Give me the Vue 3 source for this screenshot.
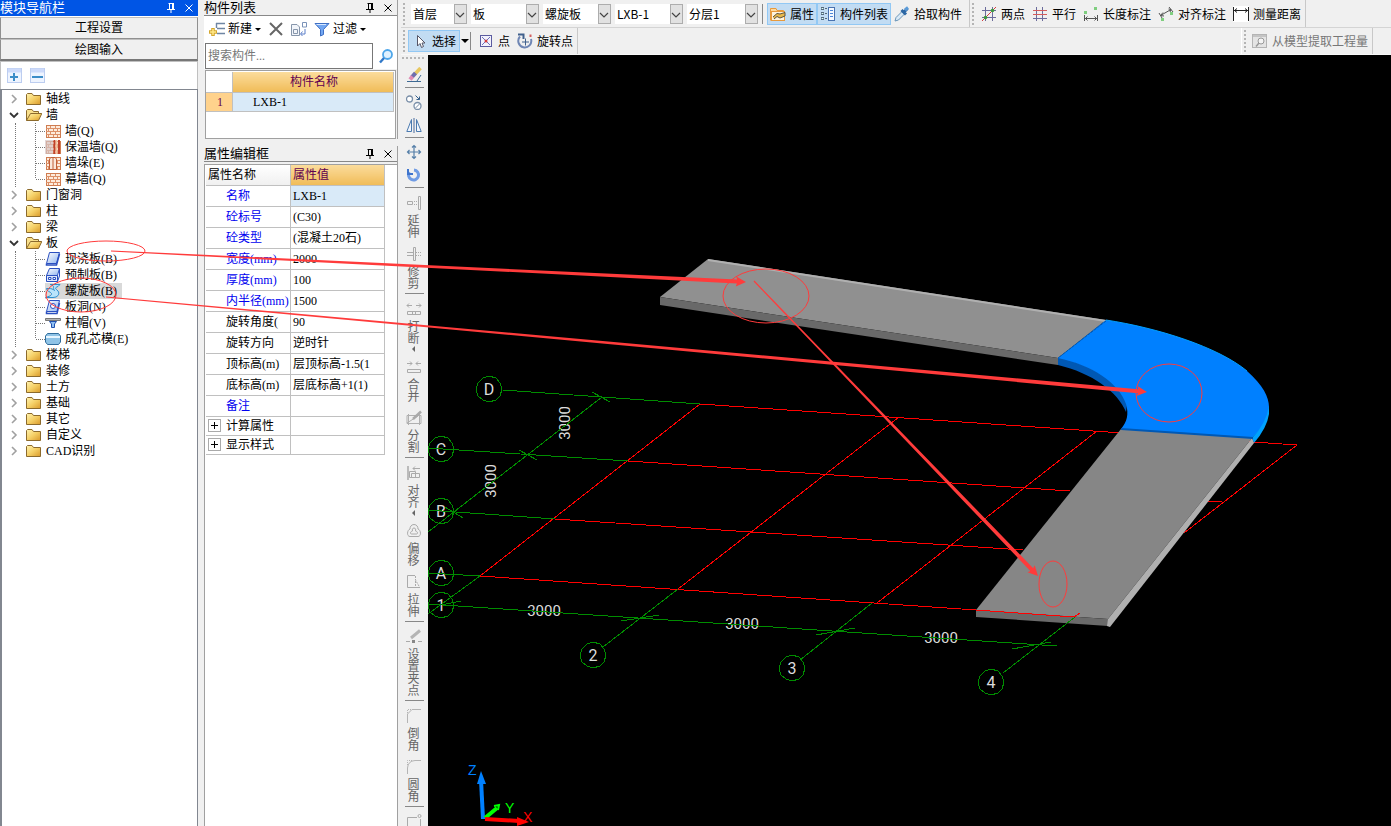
<template>
  <div class="app">
    <!-- 模块导航栏 -->
    <aside class="nav">
      <header class="title active">
        <h2>模块导航栏</h2>
        <button type="button" aria-label="固定" v-html="svg('pin')"></button>
        <button type="button" aria-label="关闭" v-html="svg('close')"></button>
      </header>
      <button type="button" class="nav-tab">工程设置</button>
      <button type="button" class="nav-tab">绘图输入</button>
      <div class="nav-tools">
        <button type="button" aria-label="展开" v-html="svg('plus')"></button>
        <button type="button" aria-label="折叠" v-html="svg('minus')"></button>
      </div>
      <ul class="tree">
        <li v-for="group in tree" :key="group.name">
          <div class="node" @click="group.open = !group.open">
            <span class="icon chevron" v-html="svg(group.open ? 'down' : 'right')"></span>
            <span class="icon" v-html="svg(group.open ? 'folderOpen' : 'folder')"></span>
            <span class="node-text">{{ group.name }}</span>
          </div>
          <ul v-if="group.open" class="children">
            <li
              v-for="(item, i) in group.children"
              :key="item.name"
              :class="['node', { selected: item.name === current }]"
              @click="current = item.name"
            >
              <span class="icon branch" v-html="svg(i === group.children.length - 1 ? 'branchEnd' : 'branch')"></span>
              <span class="leaf">
                <span class="icon" v-html="svg(item.icon)"></span>
                <span class="node-text">{{ item.name }}</span>
              </span>
            </li>
          </ul>
        </li>
      </ul>
    </aside>

    <div class="side">
      <!-- 构件列表 -->
      <section class="panel">
        <header class="title">
          <h2>构件列表</h2>
          <button type="button" aria-label="固定" v-html="svg('pin')"></button>
          <button type="button" aria-label="关闭" v-html="svg('close')"></button>
        </header>
        <div class="list-tools">
          <button type="button"><span class="icon" v-html="svg('create')"></span>新建<i class="caret"></i></button>
          <button type="button" aria-label="删除"><span class="icon" v-html="svg('remove')"></span></button>
          <button type="button" aria-label="复制"><span class="icon" v-html="svg('duplicate')"></span></button>
          <button type="button"><span class="icon" v-html="svg('filter')"></span>过滤<i class="caret"></i></button>
        </div>
        <div class="search">
          <input v-model="keyword" type="text" aria-label="搜索构件" placeholder="搜索构件..." />
          <button type="button" aria-label="搜索" v-html="svg('search')"></button>
        </div>
        <div class="list-box">
          <table class="list">
            <thead>
              <tr><th class="num"></th><th class="gold">构件名称</th></tr>
            </thead>
            <tbody>
              <tr><td class="num gold-flat">1</td><td class="picked">LXB-1</td></tr>
            </tbody>
          </table>
        </div>
      </section>

      <!-- 属性编辑框 -->
      <section class="panel grow">
        <header class="title">
          <h2>属性编辑框</h2>
          <button type="button" aria-label="固定" v-html="svg('pin')"></button>
          <button type="button" aria-label="关闭" v-html="svg('close')"></button>
        </header>
        <div class="prop-box">
          <table class="props">
            <thead>
              <tr><th>属性名称</th><th class="gold">属性值</th></tr>
            </thead>
            <tbody>
              <tr v-for="row in props" :key="row.name" :class="{ group: row.group }">
                <td :class="{ blue: row.blue }">
                  <button v-if="row.group" type="button" class="expand" :aria-label="row.name" v-html="svg('expand')"></button>{{ row.name }}
                </td>
                <td :class="{ picked: row.picked }">{{ row.value }}</td>
              </tr>
            </tbody>
          </table>
        </div>
      </section>
    </div>

    <main class="work">
      <div class="bar">
        <div class="bar-group">
          <span class="grip"></span>
          <label v-for="s in selects" :key="s.label" :class="['combo', s.size]">
            <select v-model="s.value" :aria-label="s.label">
              <option>{{ s.value }}</option>
            </select>
            <span class="combo-arrow" v-html="svg('comboArrow')"></span>
          </label>
          <span class="sep"></span>
          <span class="toggles">
            <button type="button" class="tool on"><span class="icon" v-html="svg('attrs')"></span>属性</button>
            <button type="button" class="tool on"><span class="icon" v-html="svg('members')"></span>构件列表</button>
            <button type="button" class="tool"><span class="icon" v-html="svg('picker')"></span>拾取构件</button>
          </span>
        </div>
        <div class="bar-group measure">
          <span class="grip"></span>
          <button v-for="t in measures" :key="t.name" type="button" class="tool flat">
            <span class="icon" v-html="svg(t.icon)"></span>{{ t.name }}
          </button>
        </div>
      </div>
      <div class="bar">
        <div class="bar-group draw">
          <span class="grip"></span>
          <button type="button" class="tool on"><span class="icon" v-html="svg('cursor')"></span>选择</button>
          <i class="caret big"></i>
          <span class="sep"></span>
          <button type="button" class="tool flat"><span class="icon" v-html="svg('point')"></span>点</button>
          <button type="button" class="tool flat"><span class="icon" v-html="svg('rotatePoint')"></span>旋转点</button>
        </div>
        <div class="bar-group extract">
          <span class="grip"></span>
          <button type="button" class="tool flat" disabled><span class="icon" v-html="svg('extract')"></span>从模型提取工程量</button>
        </div>
      </div>

      <div class="stage">
        <nav class="rail">
          <span class="rail-grip"></span>
          <template v-for="(t, i) in railTools" :key="i">
            <hr v-if="t.sep" />
            <button v-else type="button" :class="['rail-tool', { bare: !t.name }]" :aria-label="t.name || t.label">
              <span class="icon" v-html="svg(t.icon)"></span>
              <span v-if="t.name" class="rail-text">{{ t.name }}</span>
              <i v-if="t.more" class="more"></i>
            </button>
          </template>
        </nav>

        <!-- 三维视图 -->
        <svg class="scene" viewBox="428 55 963 771" preserveAspectRatio="xMinYMin slice">
          <g class="labels">
            <text v-for="b in bubbles" :key="b.t" :x="b.x" :y="b.y + 6">{{ b.t }}</text>
          </g>
          <g class="labels dims">
            <text x="544" y="616">3000</text>
            <text x="742" y="629">3000</text>
            <text x="941" y="643">3000</text>
            <text transform="translate(570 423) rotate(-90)">3000</text>
            <text transform="translate(496 481) rotate(-90)">3000</text>
          </g>
          <g class="red" shape-rendering="crispEdges">
            <path d="M700 404 1297 445M628 461 1070 491M1208 501H1222M555 519 1023 550M480 576 976 610" />
            <path d="M480 576 700 404M678 589 899 417M877 603 1097 431M1184 533 1297 445" />
          </g>
          <g class="green" shape-rendering="crispEdges">
            <path d="M503 390 700 404M428 448 628 461M428 510 555 519M428 573 480 576M428 604 1057 646" />
            <path d="M428 532 602 397M480 576 428 614M678 589 603 647M872 603 800 660" />
            <path d="M592 392 610 402M519 450 537 460M445 507 463 518M441 605 461 601M621 621 659 615M816 635 855 628M1012 649 1051 642" />
            <polygon v-for="b in bubbles" :key="b.t" :points="ring(b.x, b.y)" />
          </g>

          <polygon points="708,259 1106,320 1058,358 660,297" fill="#909090" />
          <polygon points="660,297 1058,358 1058,365 660,305" fill="#696969" />
          <path d="M708 260 1106 321" stroke="#b0b0b0" stroke-width="2" />
          <path
            d="M1058 357C1092 365 1122 382 1127 405L1126 412C1118 392 1092 373 1058 365Z"
            fill="#0058b4"
          />
          <path
            d="M1106 320C1158 328 1218 347 1247 371C1263 385 1269 397 1269 407C1269 419 1261 430 1252 438L1121 429C1127 422 1129 414 1126 404C1119 383 1092 365 1058 358Z"
            fill="#0080ff"
          />
          <path d="M1269 406V414Q1267 428 1254 443L1252 438Q1266 424 1269 406Z" fill="#00a2ff" />
          <path d="M1106 320C1158 328 1218 347 1247 371" fill="none" stroke="#00a0ff" stroke-width="1" />
          <path d="M1106 321 1058 358" stroke="#0058b4" stroke-dasharray="3 1" />
          <polygon points="1121,429 1252,438 1108,619 976,610" fill="#868686" />
          <polygon points="976,610 1108,619 1108,626 976,617" fill="#6a6a6a" />
          <polygon points="1252,438 1254,443 1110,627 1107,626 1108,619" fill="#b0b0b0" />
          <path d="M1121 429 1253 438" stroke="#0058b4" stroke-width="2" />
          <path class="red" d="M976 610 1074 617 1080 613" shape-rendering="crispEdges" />
          <path class="green" d="M1075 617 1003 673" shape-rendering="crispEdges" />

          <!-- 坐标轴 -->
          <path d="M483 819 481 780" stroke="#0080ff" stroke-width="4" />
          <polygon points="481,771 477,784 486,784" fill="#0080ff" />
          <path d="M485 818 497 808" stroke="#00ff00" stroke-width="4" />
          <path d="M494 806 499 805 498 810" fill="none" stroke="#00ff00" stroke-width="2" />
          <path d="M485 819 519 821" stroke="#ff0000" stroke-width="4" />
          <polygon points="529,822 517,817 517,826" fill="#ff0000" />
          <g class="axis-names">
            <text x="468" y="775" fill="#0080ff">Z</text>
            <text x="505" y="813" fill="#00ff00">Y</text>
            <text x="523" y="822" fill="#ff0000">X</text>
          </g>
        </svg>
      </div>
    </main>

    <!-- 标注箭头 -->
    <svg class="marks" viewBox="0 0 1391 826" preserveAspectRatio="xMinYMin slice">
      <g fill="none" stroke="#ff3b3b">
        <ellipse cx="106" cy="251" rx="39" ry="10" />
        <ellipse cx="81" cy="295" rx="35" ry="17" />
        <ellipse cx="766" cy="296" rx="43" ry="27" />
        <ellipse cx="1169" cy="393" rx="33" ry="29" />
        <ellipse cx="1053" cy="584" rx="14" ry="23" />
      </g>
      <g fill="#ff3b3b">
        <polygon v-for="(a, i) in arrows" :key="i" :points="arrow(a)" />
      </g>
    </svg>
  </div>
</template>

<script setup>
import { ref } from 'vue';

const current = ref('螺旋板(B)');
const keyword = ref('');

const tree = ref([
  { name: '轴线' },
  {
    name: '墙',
    open: true,
    children: [
      { name: '墙(Q)', icon: 'wall' },
      { name: '保温墙(Q)', icon: 'wallWarm' },
      { name: '墙垛(E)', icon: 'wallPier' },
      { name: '幕墙(Q)', icon: 'wall' }
    ]
  },
  { name: '门窗洞' },
  { name: '柱' },
  { name: '梁' },
  {
    name: '板',
    open: true,
    children: [
      { name: '现浇板(B)', icon: 'slab' },
      { name: '预制板(B)', icon: 'slabPre' },
      { name: '螺旋板(B)', icon: 'slabSpiral' },
      { name: '板洞(N)', icon: 'slabHole' },
      { name: '柱帽(V)', icon: 'cap' },
      { name: '成孔芯模(E)', icon: 'core' }
    ]
  },
  { name: '楼梯' },
  { name: '装修' },
  { name: '土方' },
  { name: '基础' },
  { name: '其它' },
  { name: '自定义' },
  { name: 'CAD识别' }
]);

const props = [
  { name: '名称', value: 'LXB-1', blue: true, picked: true },
  { name: '砼标号', value: '(C30)', blue: true },
  { name: '砼类型', value: '(混凝土20石)', blue: true },
  { name: '宽度(mm)', value: '2000', blue: true },
  { name: '厚度(mm)', value: '100', blue: true },
  { name: '内半径(mm)', value: '1500', blue: true },
  { name: '旋转角度(', value: '90' },
  { name: '旋转方向', value: '逆时针' },
  { name: '顶标高(m)', value: '层顶标高-1.5(1' },
  { name: '底标高(m)', value: '层底标高+1(1)' },
  { name: '备注', value: '', blue: true },
  { name: '计算属性', value: '', group: true },
  { name: '显示样式', value: '', group: true }
];

const selects = ref([
  { label: '楼层', value: '首层', size: 'small' },
  { label: '类别', value: '板', size: 'medium' },
  { label: '类型', value: '螺旋板', size: 'medium' },
  { label: '构件', value: 'LXB-1', size: 'medium' },
  { label: '分层', value: '分层1', size: 'large' }
]);

const measures = [
  { name: '两点', icon: 'twoPoint' },
  { name: '平行', icon: 'parallel' },
  { name: '长度标注', icon: 'dimLength' },
  { name: '对齐标注', icon: 'dimAlign' },
  { name: '测量距离', icon: 'ruler' }
];

const railTools = [
  { icon: 'eraser', label: '删除' },
  { sep: true },
  { icon: 'copy', label: '复制' },
  { icon: 'mirror', label: '镜像' },
  { sep: true },
  { icon: 'move', label: '移动' },
  { icon: 'rotate', label: '旋转' },
  { sep: true },
  { icon: 'extend', name: '延伸' },
  { icon: 'trim', name: '修剪' },
  { sep: true },
  { icon: 'split', name: '打断', more: true },
  { icon: 'join', name: '合并' },
  { icon: 'cut', name: '分割' },
  { sep: true },
  { icon: 'align', name: '对齐', more: true },
  { icon: 'offset', name: '偏移' },
  { icon: 'stretch', name: '拉伸' },
  { sep: true },
  { icon: 'grips', name: '设置夹点' },
  { sep: true },
  { icon: 'chamfer', name: '倒角' },
  { icon: 'fillet', name: '圆角' },
  { sep: true },
  { icon: 'rect', label: '矩形' }
];

const bubbles = [
  { t: 'D', x: 489, y: 389 },
  { t: 'C', x: 441, y: 449 },
  { t: 'B', x: 441, y: 511 },
  { t: 'A', x: 441, y: 573 },
  { t: '1', x: 441, y: 605 },
  { t: '2', x: 593, y: 655 },
  { t: '3', x: 792, y: 668 },
  { t: '4', x: 991, y: 682 }
];

// 起点、终点
const arrows = [
  [111, 251, 746, 282],
  [106, 297, 1147, 392],
  [754, 281, 1038, 576]
];

const ring = (cx, cy) => {
  const pts = [];
  for (let i = 0; i < 12; i++) {
    const a = (i * Math.PI) / 6;
    pts.push(`${Math.round(cx + 13 * Math.cos(a))},${Math.round(cy + 13 * Math.sin(a))}`);
  }
  return pts.join(' ');
};

// 由细到粗的箭头
const arrow = ([x1, y1, x2, y2]) => {
  const len = Math.hypot(x2 - x1, y2 - y1);
  const ux = (x2 - x1) / len;
  const uy = (y2 - y1) / len;
  const at = (d, w) => `${x1 + ux * d - uy * w},${y1 + uy * d + ux * w}`;
  return [
    at(0, 0.6), at(len - 9, 2), at(len - 10, 5), at(len, 0),
    at(len - 10, -5), at(len - 9, -2), at(0, -0.6)
  ].join(' ');
};

const folderDefs = '<linearGradient id="fd" x1="0" y1="0" x2="1" y2="1"><stop offset="0" stop-color="#fff3b0"/><stop offset=".5" stop-color="#f5d067"/><stop offset="1" stop-color="#d9992a"/></linearGradient>';
const slabDefs = '<linearGradient id="sl" x1="0" y1="0" x2="1" y2="1"><stop offset="0" stop-color="#fff"/><stop offset="1" stop-color="#8fb4ef"/></linearGradient>';
const bricks = '<rect x="1.500" y="2.500" width="14" height="12" fill="#fdebdc" stroke="#cf7c50"/><path d="M1 5.500H15M1 8.500H15M1 11.500H15M5.500 3V5M10.500 3V5M3.500 6V8M8.500 6V8M12.500 6V8M5.500 9V11M10.500 9V11M3.500 12V14M8.500 12V14M12.500 12V14" stroke="#dc9068" fill="none"/>';

const icons = {
  pin: '<path d="M5.500 3.500H10.500M6.500 3.500V9M9.500 3V9M10.500 3V9M4 9.500H12M8 10V13" stroke="currentColor" fill="none"/>',
  close: '<path d="M4.500 4.500 11.500 11.500M11.500 4.500 4.500 11.500" stroke="currentColor" fill="none"/>',
  plus: '<rect x=".5" y=".5" width="14" height="14" fill="#eef4ff" stroke="#bccdf0"/><path d="M1 2.500H14" stroke="#cddafa" stroke-width="4"/><path d="M3 9H11M7 5V13" stroke="#3c8dc8" stroke-width="2"/>',
  minus: '<rect x=".5" y=".5" width="14" height="14" fill="#eef4ff" stroke="#bccdf0"/><path d="M1 2.500H14" stroke="#cddafa" stroke-width="4"/><path d="M2 9H13" stroke="#3c8dc8" stroke-width="2"/>',
  right: '<path d="M6 4 10 8 6 12" fill="none" stroke="#a0a0a0" stroke-width="1.600"/>',
  down: '<path d="M4 6 8 10 12 6" fill="none" stroke="#333" stroke-width="1.800"/>',
  folder: `${folderDefs}<path d="M.5 13.500V3.500L1.500 2.500H6L7.500 4.500H14.500V13.500Z" fill="url(#fd)" stroke="#8c6a2c"/>`,
  folderOpen: `${folderDefs}<path d="M.5 13.500V3.500L1.500 2.500H6L7.500 4.500H12.500V7" fill="#f9e08c" stroke="#8c6a2c"/><path d="M.5 13.500 4.500 6.500H15.800L12.500 13.500Z" fill="url(#fd)" stroke="#8c6a2c"/>`,
  branch: '<path d="M3.500 0V16M4 8.500H13" stroke="#777" stroke-dasharray="1 1" fill="none"/>',
  branchEnd: '<path d="M3.500 0V8M4 8.500H13" stroke="#777" stroke-dasharray="1 1" fill="none"/>',
  wall: bricks,
  wallWarm: `${bricks}<rect x="0" y="1" width="8" height="14" fill="#d4c4c4" opacity=".7"/><path d="M9.500 1V15M14 1V15" stroke="#c0402a" stroke-width="2"/><path d="M11.500 1V15" stroke="#f3c2a0" stroke-width="2"/>`,
  wallPier: `${bricks}<path d="M4.500 14.500V4L6 2.500H10L11.500 4V14.500ZM8 3V14.500" fill="#fbe8da" stroke="#c06038"/>`,
  slab: `${slabDefs}<path d="M4.500 1.500H14.500L11.500 12.500H1.500Z" fill="url(#sl)" stroke="#2a4fc0"/><path d="M1.500 12.500V14H11.500L14.500 3" fill="none" stroke="#2a4fc0" stroke-width="1.500"/>`,
  slabPre: `${slabDefs}<path d="M4.500 1.500H14.500L12.500 8.500H1.500Z" fill="url(#sl)" stroke="#2a4fc0"/><path d="M1.500 8.500H12.500V14.500H1.500ZM12.500 14.500 14.500 9V2" fill="#dfe9fb" stroke="#2a4fc0"/><path d="M3.500 10.500H6V12.500H3.500ZM8 10.500H10.500V12.500H8Z" fill="#fff" stroke="#2a4fc0"/>`,
  slabSpiral: '<path d="M5 1.500H15L13 3.500C10 4.500 10 5.500 12 7C15 9.500 14 12.500 11 14L8 14.500H.5C4 13.500 7 12.500 6.500 10.500C5.500 8.500 1.500 8.500 1.500 5.500H4C6 5.500 8 6 9.500 7.500C7 4.500 11 3 5 1.500Z" fill="#b9e4fb" stroke="#2b8fd0"/>',
  slabHole: `${slabDefs}<path d="M4.500 1.500H14.500L12 12.500H1.500Z" fill="url(#sl)" stroke="#2a4fc0"/><path d="M1.500 12.500V14.500H12L14.500 4" fill="none" stroke="#2a4fc0" stroke-width="1.500"/><circle cx="8" cy="7" r="2.500" fill="#fff" stroke="#2a4fc0"/>`,
  cap: '<path d="M.5 3.500H15.500V5.500H.5Z" fill="#b5b5b5" stroke="#777"/><path d="M4.500 6.500H11.500L9.500 9V12.500H6.500V9Z" fill="#8fc0f3" stroke="#2050b0"/>',
  core: '<path d="M2.500 2.500H13.500L15.500 5V11L13.500 13.500H2.500L.5 11V5Z" fill="#8fc3e6" stroke="#2f6c9c"/><path d="M1 6H15" stroke="#e6f5ff" stroke-width="2"/>',
  create: '<path d="M7 2.500H16M8 7.500H16M8 12.500H16M7.500 2V7" stroke="#6f86a4" stroke-width="1.400" fill="none"/><path d="M4 7V15M0 11H8" stroke="#d4a72c" stroke-width="3.500"/><path d="M4 8V14M1 11H7" stroke="#ffe98a" stroke-width="1.500"/>',
  remove: '<path d="M2 2 14 14M14 2 2 14" stroke="#666" stroke-width="2"/>',
  duplicate: '<path d="M.5 3.500H6L8.500 6V14.500H.5Z" fill="#f2f5fa" stroke="#8796ab"/><path d="M2.500 8.500H6.500V12.500H2.500Z" stroke="#8796ab" fill="none"/><path d="M11.500 1.500H15.500V6H11.500Z" fill="#fff" stroke="#7a92b8"/><path d="M10 13H14V8M11.500 10.500 9.500 13 11.500 15" fill="none" stroke="#5b7ec9"/>',
  filter: '<path d="M1 2.500H15L9.500 8.500V13.500L6.500 15V8.500Z" fill="#73a7f2" stroke="#3e6fc4"/><path d="M2.500 3.500H12" stroke="#d8e8ff"/>',
  search: '<circle cx="9.500" cy="6.500" r="4.500" fill="#dff1ff" stroke="#4da6ea" stroke-width="1.800"/><path d="M6 10 2 14.500" stroke="#3178c8" stroke-width="2.400"/>',
  expand: '<rect x="1.500" y="1.500" width="12" height="12" fill="#fff" stroke="#aaa"/><path d="M4 7.500H11M7.500 4V11" stroke="#000"/>',
  comboArrow: '<path d="M4 6 8 10 12 6" fill="none" stroke="#444" stroke-width="1.200"/>',
  attrs: '<path d="M.5 14.500V2.500H6L7 4.500H13.500V7" fill="#fdd9a0" stroke="#e89a3c"/><rect x="1.500" y="5.500" width="13" height="9" fill="#fff3dc" stroke="#e89a3c"/><path d="M3 11 7 7.500 10 8 15 6.500V10L10 12 7 10.500 4 13" fill="#e8b84a" stroke="#5b5240"/>',
  members: '<path d="M1 2.500H4M1 7.500H4M1 12.500H4" stroke="#345" stroke-width="2.500"/><path d="M1.500 2.500H3.500M1.500 7.500H3.500M1.500 12.500H3.500" stroke="#dff" /><path d="M5 2.500H7M5 7.500H7M5 12.500H7" stroke="#567"/><rect x="8.500" y="1.500" width="6" height="13" fill="#f5f9ff" stroke="#4972b0"/><path d="M10 4.500H13M10 7.500H13M10 10.500H13" stroke="#4a86d8"/>',
  picker: '<path d="M1 15 2 11.500 8 5.500 10.500 8 4.500 14Z" fill="#d9e9f6" stroke="#6a95b8"/><path d="M7.500 4 12 8.500M9.500 6.500 13.500 2.500" stroke="#2c67a4" stroke-width="3"/><path d="M11 4 14 1.500" stroke="#5b9bd8" stroke-width="3"/>',
  twoPoint: '<path d="M4.500 1V15M11.500 1V15M1 4.500H15M1 11.500H15" stroke="#6c6c9c"/><path d="M1 15 15 1" stroke="#d43c3c"/><circle cx="4.500" cy="11.500" r="1.800" fill="#3f9a3f"/><circle cx="11.500" cy="4.500" r="1.800" fill="#3f9a3f"/>',
  parallel: '<path d="M4.500 1V15M10.500 1V15" stroke="#6c6c9c"/><path d="M1 4.500H15M1 8.500H15" stroke="#d45c5c"/><path d="M1 12.500H15" stroke="#6c6c9c"/>',
  dimLength: '<path d="M1.500 9V15M14.500 9V15M2 12.500H14M4.500 10.500 2.500 12.500 4.500 14.500M11.500 10.500 13.500 12.500 11.500 14.500" fill="none" stroke="#555"/><path d="M1 5H4V8H1ZM11 1H14V4H11Z" fill="#7fce7f"/>',
  dimAlign: '<path d="M1 7 4 12M11 1 15 6M2.500 9.500 13 3.500M5 6.500 2.500 9.500 6 10M10.500 3 13 3.500 12 6" fill="none" stroke="#555"/><path d="M3 12H6V15H3ZM12 6H15V9H12Z" fill="#7fce7f"/>',
  ruler: '<rect x="0" y="0" width="16" height="16" fill="#fff"/><path d="M.5 1V15M15.500 1V15M1 4.500H15M4 2.500 1.500 4.500 4 6.500M12 2.500 14.500 4.500 12 6.500" fill="none" stroke="#222"/>',
  cursor: '<path d="M5.500 2.500V13L8 10.500 9.500 14.500 11.500 13.500 10 10H13Z" fill="#fff" stroke="#556"/>',
  point: '<rect x="2.500" y="2.500" width="11" height="11" fill="#f2f2fc" stroke="#5b5ba0"/><path d="M4 4 12 12M12 4 4 12" stroke="#7070b8"/><circle cx="8" cy="8" r="1.500" fill="#d43c3c"/>',
  rotatePoint: '<path d="M3 3.500A6.500 6.500 0 1 0 14 6" fill="none" stroke="#6f86b4" stroke-width="2"/><path d="M1 1.500H6.500V6" fill="none" stroke="#40608c" stroke-width="2"/><path d="M5 9H12M8.500 5.500V12.500" stroke="#40608c"/><path d="M13.500 1.500V4" stroke="#d46060" stroke-width="2"/>',
  extract: '<rect x=".5" y="1.500" width="14" height="13" fill="#e4e4e4" stroke="#b4b4b4"/><path d="M1 3H14" stroke="#c4c4c4" stroke-width="2"/><circle cx="9" cy="8" r="3" fill="#f4f4f4" stroke="#999"/><path d="M7 10 4 13.500" stroke="#999" stroke-width="1.500"/>',
  eraser: '<path d="M14.500 1 8 8" stroke="#e8c860" stroke-width="3.500"/><path d="M9.500 6 6 10" stroke="#6d6fb0" stroke-width="4"/><path d="M6.500 9.500 4 12.500" stroke="#e08cb4" stroke-width="4"/><path d="M1 14.500H15M11 14 15 8" stroke="#3f6a94" fill="none"/>',
  copy: '<circle cx="3.500" cy="5" r="3" fill="#fff" stroke="#7a8fa8" stroke-width="1.300"/><circle cx="11.500" cy="12" r="3.500" fill="#fff" stroke="#7a8fa8" stroke-width="1.300"/><path d="M9.500 14 13.500 10" stroke="#7a8fa8"/><path d="M9.500 1.500 13.500 5.500M13.500 2.500V5.500H10.500" fill="none" stroke="#35608c"/>',
  mirror: '<path d="M5.500 2.500V14.500H.8ZM10.500 2.500V14.500H15.200Z" fill="#f2f6fc" stroke="#4a7ab0"/><path d="M8 1V16" stroke="#4a6a9c"/>',
  move: '<path d="M8 1.500V14.500M1.500 8H14.500M6 3.500 8 1.500 10 3.500M6 12.500 8 14.500 10 12.500M3.500 6 1.500 8 3.500 10M12.500 6 14.500 8 12.500 10" fill="none" stroke="#557fa8" stroke-width="1.200"/>',
  rotate: '<path d="M3.500 5A5 5 0 1 0 8 3" fill="none" stroke="#6f9be4" stroke-width="3"/><path d="M2 2V7H7" fill="none" stroke="#3f74cc" stroke-width="2"/>',
  extend: '<path d="M12.500 1.500H14.500V14.500H12.500ZM1.500 6.500H6.500V9.500H1.500Z" fill="none" stroke="#aaa"/><path d="M8 6.500H12M8 9.500H12" stroke="#aaa" stroke-dasharray="1 1"/>',
  trim: '<path d="M7.500 1.500H9.500V14.500H7.500ZM1 6.500H7M1 9.500H7" fill="none" stroke="#aaa"/><path d="M10 6.500H16M10 9.500H16" stroke="#aaa" stroke-dasharray="1 1"/>',
  split: '<path d="M1 4.500H6M3 2.500 1 4.500 3 6.500M10 4.500H15M13 2.500 15 4.500 13 6.500M1.500 10.500H14.500V13.500H1.500ZM6.500 10V14M9.500 10V14" fill="none" stroke="#aaa"/>',
  join: '<path d="M1 4.500H6M4 2.500 6 4.500 4 6.500M10 4.500H15M12 2.500 10 4.500 12 6.500M1.500 10.500H14.500V13.500H1.500Z" fill="none" stroke="#aaa"/>',
  cut: '<path d="M1 5.500H15V13.500H1ZM2.500 4V15M13.500 4V15M1 13 12 6" fill="none" stroke="#b0b0b0"/><path d="M7 9 15 1.500" stroke="#aaa" stroke-width="2.500"/>',
  align: '<path d="M2 1V15" stroke="#aaa" stroke-width="1.500"/><path d="M7 3.500H14M9 1.500 7 3.500 9 5.500M3.500 6.500H9.500V12.500H3.500ZM5.500 8.500H13.500V12.500H5.500Z" fill="none" stroke="#aaa"/>',
  offset: '<path d="M8 1.500C11 1.500 12 4 12 6C15 7 15.500 13.500 12 13.500H4C.5 13.500 1 7 4 6C4 4 5 1.500 8 1.500Z" fill="none" stroke="#aaa"/><path d="M8 5C9.500 5 10 6.500 9.500 8C12 8.500 12 11 10.500 11H5.500C4 11 4 8.500 6.500 8C6 6.500 6.500 5 8 5Z" fill="none" stroke="#aaa"/>',
  stretch: '<path d="M9 1.500H1.500V13.500H14" fill="none" stroke="#aaa"/><path d="M9.500 2V6L13.500 13M9.500 7V12" fill="none" stroke="#aaa" stroke-dasharray="2 1"/>',
  grips: '<path d="M5 9 14 1.500" stroke="#b4b4b4" stroke-width="3"/><path d="M0 12.500H4M12 12.500H16" stroke="#aaa"/><rect x="6" y="11" width="3" height="3" fill="#888"/>',
  chamfer: '<path d="M1.500 15V6L6 1.500H15" fill="none" stroke="#b4b4b4"/><path d="M1.500 5V1.500H5" fill="none" stroke="#b4b4b4" stroke-dasharray="1 1"/>',
  fillet: '<path d="M1.500 15V9Q2 2 9 1.500H15" fill="none" stroke="#b4b4b4"/><path d="M1.500 6V1.500H6" fill="none" stroke="#b4b4b4" stroke-dasharray="1 1"/>',
  rect: '<path d="M11 4.500H1.500V15H14.500V6" fill="none" stroke="#aaa"/><circle cx="13.500" cy="3" r="1.500" fill="none" stroke="#aaa"/>'
};

const svg = (name) => `<svg width="16" height="16" viewBox="0 0 16 16" display="block">${icons[name]}</svg>`;
</script>

<style>
body {
  background: #f0f0f0;
}
</style>

<style scoped>
.app {
  position: relative;
  display: grid;
  grid-template-columns: 198px 194px 1fr;
  column-gap: 6px;
  height: 100vh;
  overflow: hidden;
  font-family: "Noto Sans CJK SC", sans-serif;
  font-size: 12px;
  line-height: 16px;
  color: #000;
  background: #f0f0f0;
}

button,
input,
select {
  font: inherit;
  color: inherit;
  margin: 0;
}

button {
  padding: 0;
  border: none;
  background: none;
}

ul {
  margin: 0;
  padding: 0;
  list-style: none;
}

.icon {
  flex: none;
  width: 16px;
  height: 16px;
}

/* 面板标题 */
.title {
  display: flex;
  align-items: center;
  flex: none;
  height: 15px;
  border-bottom: 1px solid #888;
}

.title h2 {
  flex: 1;
  margin: 0;
  font-size: 13px;
  font-weight: 400;
  line-height: 14px;
}

.title button {
  width: 18px;
  padding-left: 1px;
}

.title.active {
  color: #fff;
  background: #0055e5;
  border-color: #0055e5;
}

/* 左侧导航 */
.nav {
  display: flex;
  flex-direction: column;
  min-height: 0;
  background: #fff;
}

.nav,
.side {
  font-family: "Liberation Serif", "Noto Sans CJK SC", sans-serif;
}

.nav-tab {
  flex: none;
  height: 22px;
  border: 1px solid #909090;
  border-top-color: #c0c0c0;
  background: #f0f0f0;
}

.title + .nav-tab {
  margin-top: 1px;
}

.nav-tab + .nav-tab {
  border-bottom: 2px solid #777;
}

.nav-tools {
  display: flex;
  gap: 7px;
  padding: 6px 6px 5px;
  border: 1px solid #c0c0c0;
  border-bottom: none;
}

.tree {
  flex: 1;
  padding-top: 1px;
  border: 1px solid #828790;
  border-left-width: 2px;
  border-bottom: none;
}

.node {
  display: flex;
  align-items: center;
  height: 16px;
}

.chevron {
  margin: 0 4px;
}

.node-text {
  padding-left: 4px;
  white-space: nowrap;
}

.children {
  margin-left: 13px;
  border-left: 1px dotted #777;
}

.branch {
  margin-left: 16px;
  margin-right: -3px;
}

.leaf {
  display: flex;
  height: 16px;
  padding-right: 5px;
}

.selected .leaf {
  background: #d9d9d9;
}

/* 构件与属性面板 */
.side {
  display: flex;
  flex-direction: column;
  gap: 7px;
  min-height: 0;
}

.panel {
  display: flex;
  flex-direction: column;
  border-right: 1px solid #a0a0a0;
}

.panel.grow {
  flex: 1;
}

.list-tools {
  display: flex;
  gap: 7px;
  padding: 5px 5px 6px;
  background: #fff;
}

.list-tools button {
  display: flex;
  align-items: center;
  gap: 3px;
}

.caret {
  border: 3px solid transparent;
  border-top-color: #000;
  border-bottom: none;
}

.search {
  display: flex;
  height: 26px;
  padding-left: 1px;
  background: #fff;
}

.search input {
  flex: 1;
  min-width: 0;
  padding: 0 2px;
  border: 1px solid #777;
  outline: none;
}

.search input::placeholder {
  color: #777;
  opacity: 1;
}

.search button {
  padding: 0 3px 0 5px;
}

.list-box {
  height: 69px;
  margin: 1px 1px 0;
  padding: 1px 1px 1px 0;
  border: 1px solid #a0a0a0;
  background: #fff;
  box-sizing: border-box;
}

table {
  border-collapse: collapse;
  table-layout: fixed;
  width: 100%;
}

th,
td {
  height: 20px;
  padding: 0 0 0 2px;
  border: solid #c0c0c0;
  border-width: 0 1px 1px 0;
  font-weight: 400;
  text-align: left;
  white-space: nowrap;
}

.gold {
  color: #600050;
  background: linear-gradient(#fbdc9c, #f0bc58);
}

.gold-flat {
  color: #600050;
  background: #ffd28c;
}

.picked {
  background: #d9eaf8;
}

.list .num {
  width: 24px;
  text-align: center;
}

.list .gold {
  text-align: center;
}

.list .picked {
  padding-left: 20px;
}

.list td {
  height: 18px;
}

.prop-box {
  flex: 1;
  margin-top: 2px;
  padding: 0 12px 0 1px;
  border: solid #a0a0a0;
  border-width: 1px 0 0 1px;
  background: #fff;
}

.props th:first-child {
  width: 82px;
  background: linear-gradient(#fff, #f0f0f0);
}

.props td:first-child {
  padding-left: 20px;
}

.props .blue {
  color: #0000f0;
}

.props .group td {
  height: 18px;
}

.expand {
  width: 16px;
  margin: 0 3px 0 -19px;
  vertical-align: top;
}

/* 顶部工具栏 */
.work {
  display: flex;
  flex-direction: column;
  min-width: 0;
  min-height: 0;
  margin-left: -3px;
}

.bar {
  display: flex;
  flex: none;
  height: 27px;
  border-bottom: 1px solid #d4d4d4;
}

.bar + .bar {
  height: 26px;
  border-bottom-color: #f8f8f8;
}

.bar-group {
  display: flex;
  align-items: center;
  gap: 4px;
  padding-right: 4px;
  border-right: 1px solid #c8c8c8;
}

.grip {
  width: 2px;
  height: 22px;
  margin: 0 2px;
  background: repeating-linear-gradient(#b4b4b4 0 2px, transparent 2px 4px);
}

.combo {
  position: relative;
  height: 20px;
}

.combo.small {
  width: 56px;
}

.combo.medium {
  width: 68px;
}

.combo.large {
  width: 71px;
}

.combo select {
  width: 100%;
  height: 20px;
  padding: 0 14px 0 2px;
  border: none;
  appearance: none;
  background: #fff;
}

.combo-arrow {
  position: absolute;
  top: 0;
  right: 0;
  width: 13px;
  height: 20px;
  padding-top: 2px;
  border: 1px solid #adadad;
  background: #e1e1e1;
  box-sizing: border-box;
  pointer-events: none;
}

.combo-arrow :deep(svg) {
  margin-left: -3px;
}

.sep {
  width: 1px;
  height: 20px;
  background: #888;
}

.toggles {
  display: flex;
}

.tool {
  display: flex;
  align-items: center;
  gap: 4px;
  height: 22px;
  padding: 0 2px;
  border: 1px solid transparent;
  white-space: nowrap;
}

.tool.on {
  border-color: #92c8f4;
  background: #c2dcf3;
}

.tool.flat {
  padding: 0;
  border: none;
}

.bar .measure {
  gap: 7px;
}

.measure .grip {
  margin-right: 0;
}

.bar .draw {
  gap: 7px;
}

.draw .grip {
  margin-right: -4px;
}

.draw .tool.on {
  padding: 0 3px;
}

.caret.big {
  margin: 0 -6px;
  border-width: 4px;
  border-bottom: none;
}

.draw .sep {
  height: 18px;
}

.extract {
  margin-left: auto;
  margin-right: 18px;
  border-left: 1px solid #fff;
}

.extract button {
  color: #777;
}

/* 左侧竖排工具 */
.stage {
  display: flex;
  flex: 1;
  min-height: 0;
}

.rail {
  display: flex;
  flex-direction: column;
  flex: none;
  width: 25px;
  padding-right: 2px;
  overflow: hidden;
  color: #666;
  background: #f0f0f0;
}

.rail-grip {
  flex: none;
  height: 2px;
  margin: 2px 0 5px 1px;
  background: repeating-linear-gradient(90deg, #b4b4b4 0 2px, transparent 2px 4px);
}

.rail hr {
  flex: none;
  width: 19px;
  height: 1px;
  margin: 0 4px 3px;
  border: none;
  background: #888;
}

.rail-tool {
  display: flex;
  flex-direction: column;
  align-items: center;
  flex: none;
  gap: 3px;
  padding: 4px 0;
}

.rail-tool.bare {
  padding: 3px 0 4px;
}

.rail-text {
  width: 12px;
  line-height: 12px;
  word-break: break-all;
}

.more {
  margin: -1px 0;
  border: 3px solid transparent;
  border-right-color: #666;
  border-left: none;
}

/* 三维视图 */
.scene {
  flex: 1;
  min-width: 0;
  height: 100%;
  background: #000;
}

.red {
  fill: none;
  stroke: #ff0000;
}

.green {
  fill: none;
  stroke: #008c00;
}

.labels {
  fill: #dcdcdc;
  font-family: Roboto, sans-serif;
  font-size: 16px;
  text-anchor: middle;
}

.dims {
  font-size: 15px;
}

.axis-names {
  font-family: "Liberation Sans", sans-serif;
  font-size: 14px;
}

.marks {
  position: absolute;
  inset: 0;
  width: 100%;
  height: 100%;
  pointer-events: none;
}
</style>
